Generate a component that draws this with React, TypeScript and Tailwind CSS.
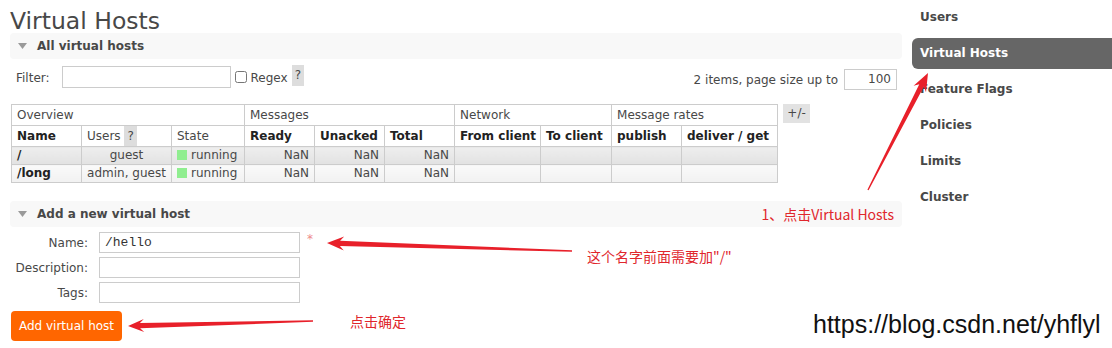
import React from 'react';

type Pt = [number, number];

function arrowPoints(from: Pt, to: Pt, headLen = 17, headW = 7, neckW = 2.6, tailW = 0.7): string {
  const [x1, y1] = from;
  const [x2, y2] = to;
  const len = Math.hypot(x2 - x1, y2 - y1);
  const ux = (x2 - x1) / len;
  const uy = (y2 - y1) / len;
  const px = -uy;
  const py = ux;
  const bx = x2 - ux * headLen;
  const by = y2 - uy * headLen;
  const nx = x2 - ux * (headLen - 4);
  const ny = y2 - uy * (headLen - 4);
  const pts: Pt[] = [
    [x1 + px * tailW, y1 + py * tailW],
    [nx + px * neckW, ny + py * neckW],
    [bx + px * headW, by + py * headW],
    [x2, y2],
    [bx - px * headW, by - py * headW],
    [nx - px * neckW, ny - py * neckW],
    [x1 - px * tailW, y1 - py * tailW],
  ];
  return pts.map(p => `${p[0].toFixed(1)},${p[1].toFixed(1)}`).join(' ');
}

function SectionBar({ title, note }: { title: string; note?: string }) {
  return (
    <div className="flex items-center h-[26px] bg-[#f8f8f8] rounded-[4px]">
      <svg width="9" height="6" viewBox="0 0 9 6" className="ml-[8px]">
        <polygon points="0,0 9,0 4.5,6" fill="#9a9a9a" />
      </svg>
      <span className="ml-[10px] font-bold">{title}</span>
      {note && (
        <span className="ml-auto pr-[8px] text-[14px] text-[#e0262c] font-['Noto_Sans_CJK_SC',sans-serif]">
          {note}
        </span>
      )}
    </div>
  );
}

const cell = 'border border-[#ccc] px-[5px] py-0 leading-[17px] whitespace-nowrap overflow-hidden';

const rows = [
  { name: '/', users: 'guest', bg: 'bg-linear-to-b from-[#eeeeee] to-[#e2e2e2]' },
  { name: '/long', users: 'admin, guest', bg: 'bg-linear-to-b from-[#fafafa] to-[#f1f1f1]' },
];

function HostsTable() {
  return (
    <div className="flex items-start mt-[16px] ml-[1px]">
      <table className="border-collapse table-fixed w-[766px]">
        <colgroup>
          <col className="w-[70px]" />
          <col className="w-[90px]" />
          <col className="w-[73px]" />
          <col className="w-[70px]" />
          <col className="w-[70px]" />
          <col className="w-[70px]" />
          <col className="w-[86px]" />
          <col className="w-[71px]" />
          <col className="w-[70px]" />
          <col className="w-[96px]" />
        </colgroup>
        <thead>
          <tr className="h-[21px]">
            <th colSpan={3} className={`${cell} text-left font-normal`}>Overview</th>
            <th colSpan={3} className={`${cell} text-left font-normal`}>Messages</th>
            <th colSpan={2} className={`${cell} text-left font-normal`}>Network</th>
            <th colSpan={2} className={`${cell} text-left font-normal`}>Message rates</th>
          </tr>
          <tr className="h-[21px]">
            <th className={`${cell} text-left font-bold text-[#222]`}>Name</th>
            <th className={`${cell} text-left font-normal`}>
              Users{' '}
              <span className="inline-block align-middle bg-[#ddd] px-[3px] h-[20px] leading-[20px]">?</span>
            </th>
            <th className={`${cell} text-left font-normal`}>State</th>
            <th className={`${cell} text-left font-bold text-[#222]`}>Ready</th>
            <th className={`${cell} text-left font-bold text-[#222]`}>Unacked</th>
            <th className={`${cell} text-left font-bold text-[#222]`}>Total</th>
            <th className={`${cell} text-left font-bold text-[#222]`}>From client</th>
            <th className={`${cell} text-left font-bold text-[#222]`}>To client</th>
            <th className={`${cell} text-left font-bold text-[#222]`}>publish</th>
            <th className={`${cell} text-left font-bold text-[#222]`}>deliver / get</th>
          </tr>
        </thead>
        <tbody>
          {rows.map(r => (
            <tr key={r.name} className="h-[18px]">
              <td className={`${cell} ${r.bg} text-left font-bold text-[#222]`}>{r.name}</td>
              <td className={`${cell} ${r.bg} text-center`}>{r.users}</td>
              <td className={`${cell} ${r.bg} text-left`}>
                <span className="inline-block w-[10px] h-[10px] bg-[#90ee90] mr-[4px] align-[-1px]" />
                running
              </td>
              <td className={`${cell} ${r.bg} text-right`}>NaN</td>
              <td className={`${cell} ${r.bg} text-right`}>NaN</td>
              <td className={`${cell} ${r.bg} text-right`}>NaN</td>
              <td className={`${cell} ${r.bg}`} />
              <td className={`${cell} ${r.bg}`} />
              <td className={`${cell} ${r.bg}`} />
              <td className={`${cell} ${r.bg}`} />
            </tr>
          ))}
        </tbody>
      </table>
      <span className="ml-[5px] w-[27px] h-[19px] leading-[19px] text-center bg-[#e2e2e2]">+/-</span>
    </div>
  );
}

function FormRow({ label, value, required }: { label: string; value?: string; required?: boolean }) {
  return (
    <div className="flex items-center h-[21px]">
      <span className="w-[78px] text-right">{label}</span>
      <div className="ml-[11px] w-[201px] h-[21px] border border-[#ccc] bg-white px-[5px] leading-[19px] font-['Liberation_Mono',monospace] text-[13px] text-[#333]">
        {value}
      </div>
      {required && <span className="ml-[7px] self-start text-[#ee8a8a] text-[12px] leading-[14px]">*</span>}
    </div>
  );
}

const navItems = ['Users', 'Virtual Hosts', 'Feature Flags', 'Policies', 'Limits', 'Cluster'];

export default function App() {
  return (
    <div className="relative w-[1112px] h-[348px] overflow-hidden bg-white text-[12px] text-[#484848] font-['DejaVu_Sans',Verdana,sans-serif]">
      <div className="flex">
        <main className="ml-[10px] w-[892px]">
          <h1 className="h-[33px] pt-[8px] text-[23.5px] leading-[26px] text-[#484848]">Virtual Hosts</h1>
          <SectionBar title="All virtual hosts" />

          <div className="flex items-start mt-[7px] h-[22px]">
            <span className="ml-[6px] mt-[3px]">Filter:</span>
            <div className="ml-[12px] w-[169px] h-[22px] border border-[#ccc]" />
            <input type="checkbox" className="ml-[4px] mt-[5px] w-[12px] h-[12px]" />
            <span className="ml-[4px] mt-[3px]">Regex</span>
            <span className="ml-[4px] -mt-[1px] h-[21px] leading-[21px] px-[3px] bg-[#ddd]">?</span>
            <div className="ml-auto mr-[5px] mt-[3px] flex items-center">
              <span>2 items, page size up to</span>
              <div className="ml-[6px] w-[53px] h-[21px] border border-[#ccc] text-right pr-[5px] leading-[19px]">100</div>
            </div>
          </div>

          <HostsTable />

          <div className="mt-[18px]">
            <SectionBar title="Add a new virtual host" note="1、点击Virtual Hosts" />
          </div>

          <div className="mt-[5px] flex flex-col gap-[4px]">
            <FormRow label="Name:" value="/hello" required />
            <FormRow label="Description:" />
            <FormRow label="Tags:" />
          </div>

          <button className="mt-[8px] ml-[1px] w-[111px] h-[30px] rounded-[4px] bg-[#ff6600] text-white text-[12px]">
            Add virtual host
          </button>
        </main>

        <nav className="ml-[10px] w-[200px] pt-[2px] flex flex-col gap-[5px]">
          {navItems.map(item => (
            <div
              key={item}
              className={
                item === 'Virtual Hosts'
                  ? 'h-[31px] leading-[31px] pl-[8px] rounded-l-[6px] bg-[#666] text-white font-bold'
                  : 'h-[31px] leading-[31px] pl-[8px] text-[#484848] font-bold'
              }
            >
              {item}
            </div>
          ))}
        </nav>
      </div>

      {/* annotations drawn over the screenshot */}
      <svg className="absolute inset-0 pointer-events-none" width="1112" height="348">
        <polygon points={arrowPoints([572, 251], [327, 243], 17, 7)} fill="#e8202a" />
        <polygon points={arrowPoints([313, 321], [128, 326], 16, 6.5)} fill="#e8202a" />
        <polygon points={arrowPoints([868, 190], [928, 73], 18, 7)} fill="#e8202a" />
      </svg>
      <span className="absolute left-[587px] top-[246px] text-[14px] leading-[20px] text-[#e0262c] font-['Noto_Sans_CJK_SC',sans-serif]">
        这个名字前面需要加"/"
      </span>
      <span className="absolute left-[350px] top-[311px] text-[14px] leading-[20px] text-[#e0262c] font-['Noto_Sans_CJK_SC',sans-serif]">
        点击确定
      </span>
      <span className="absolute left-[813px] top-[312px] text-[25px] leading-[25px] text-[#111] font-['Liberation_Sans',Arial,sans-serif]">
        https://blog.csdn.net/yhflyl
      </span>
    </div>
  );
}
